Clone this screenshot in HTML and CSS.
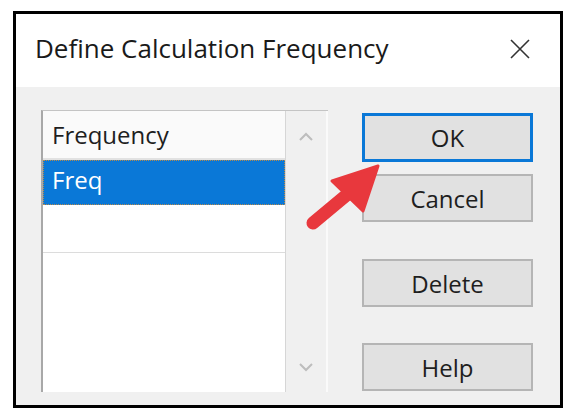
FILE: index.html
```html
<!DOCTYPE html>
<html lang="en">
<head>
  <meta charset="UTF-8">
  <title>Define Calculation Frequency</title>
  <link rel="stylesheet" href="styles.css">
</head>
<body>

  <div class="dialog">
    <div class="titlebar">
      <span class="title">Define Calculation Frequency</span>
      <svg class="close" width="20" height="20" viewBox="0 0 20 20">
        <path d="M1 1 L19 19 M19 1 L1 19" stroke="#333" stroke-width="1.6" fill="none"/>
      </svg>
    </div>

    <div class="body">
      <!-- list with header and scrollbar -->
      <div class="list">
        <div class="list-main">
          <div class="list-header">Frequency</div>
          <div class="list-rows">
            <div class="row selected">Freq</div>
          </div>
          <div class="list-empty"></div>
        </div>
        <div class="scrollbar">
          <svg width="14" height="9" viewBox="0 0 14 9"><path d="M1 8 L7 2 L13 8" stroke="#bdbdbd" stroke-width="2" fill="none"/></svg>
          <svg width="14" height="9" viewBox="0 0 14 9"><path d="M1 1 L7 7 L13 1" stroke="#bdbdbd" stroke-width="2" fill="none"/></svg>
        </div>
      </div>

      <div class="buttons">
        <button type="button" class="btn default">OK</button>
        <button type="button" class="btn cancel">Cancel</button>
        <button type="button" class="btn delete">Delete</button>
        <button type="button" class="btn help">Help</button>
      </div>

      <!-- callout arrow pointing at OK -->
      <svg class="arrow" width="90" height="80" viewBox="0 0 90 80">
        <g fill="#e8383d" stroke="#e8383d" stroke-linejoin="round" stroke-linecap="round">
          <path d="M12 66 L48 36" stroke-width="13" fill="none"/>
          <path d="M77 9 L31 24 L62 54 Z" stroke-width="3"/>
        </g>
      </svg>
    </div>
  </div>

</body>
</html>
```

FILE: styles.css
```css
body {
  margin: 0;
  padding: 11px 0 0 13px;
  background-color: #fff;
  font-family: "Open Sans", "Noto Sans", sans-serif;
}
.dialog {
  width: 544px;
  height: 391px;
  border: 3px solid #000;
  background-color: #f0f0f0;
  display: flex;
  flex-direction: column;
}
.titlebar {
  height: 73px;
  background-color: #fff;
  display: flex;
  align-items: center;
  justify-content: space-between;
  padding: 0 30px 0 19px;
}
.title {
  font-size: 26px;
  color: #1a1a1a;
  margin-top: -6px;
}
.close {
  margin-top: -4px;
}
.body {
  flex: 1;
  position: relative;
  display: flex;
  padding: 23px 0 0 25px;
}
.list {
  width: 285px;
  height: 281px;
  border-top: 1px solid #c4c4c4;
  border-left: 2px solid #a8a8a8;
  display: flex;
  background-color: #fff;
}
.list-main {
  width: 242px;
  display: flex;
  flex-direction: column;
  border-right: 1px solid #d6d6d6;
}
.list-header {
  height: 47px;
  line-height: 47px;
  padding-left: 9px;
  font-size: 24px;
  color: #1e1e1e;
  background-color: #fafafa;
  border-bottom: 2px solid #e2e2e2;
}
.list-rows {
  height: 92px;
  border-bottom: 1px solid #dcdcdc;
}
.row {
  height: 43px;
  line-height: 38px;
  padding-left: 8px;
  font-size: 24px;
}
.row.selected {
  background-color: #0a78d7;
  color: #fff;
  border: 1px dotted #b88a4a;
}
.list-empty {
  flex: 1;
}
.scrollbar {
  flex: 1;
  background-color: #f0f0f0;
  border-right: 2px solid #fafafa;
  display: flex;
  flex-direction: column;
  justify-content: space-between;
  align-items: center;
  padding: 21px 0 20px;
}
.buttons {
  display: flex;
  flex-direction: column;
  margin-left: 34px;
  padding-top: 3px;
}
.btn {
  width: 171px;
  height: 48px;
  background-color: #e1e1e1;
  border: 2px solid #b5b5b5;
  font-family: inherit;
  font-size: 24px;
  color: #1e1e1e;
  padding: 0;
}
.btn.default {
  border: 3px solid #0a78d7;
  height: 49px;
}
.btn.cancel {
  margin-top: 12px;
}
.btn.delete {
  margin-top: 37px;
}
.btn.help {
  margin-top: 36px;
}
.arrow {
  position: absolute;
  left: 285px;
  top: 70px;
}
```
